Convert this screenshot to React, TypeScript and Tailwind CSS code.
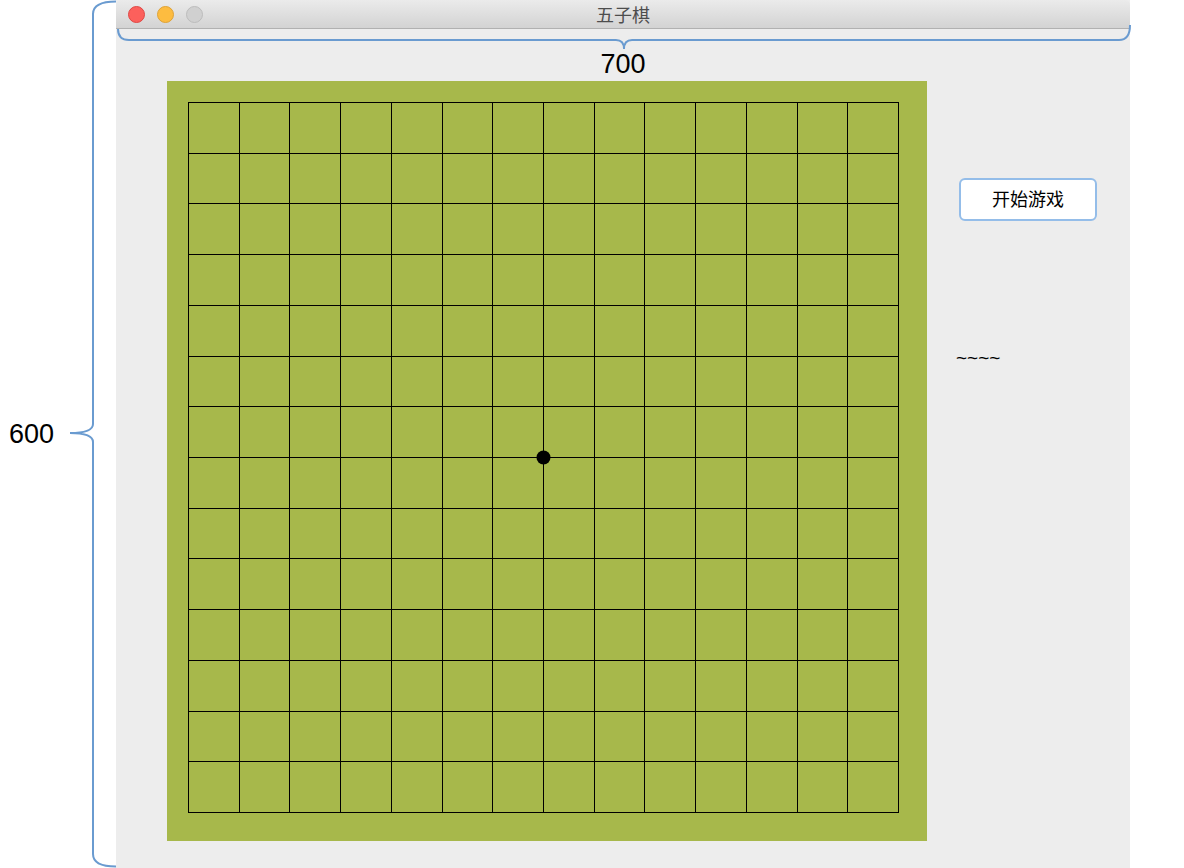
const cells = 14;
const step = 710 / cells;
const lines = Array.from({ length: cells + 1 }, (_, i) => Math.round(i * step) + 0.5);

function Board() {
  return (
    <div className="w-[760px] h-[760px] bg-[#a7b84b] p-[21px]">
      <svg width="712" height="712" className="block">
        {lines.map((p, i) => (
          <line key={"h" + i} x1={0} y1={p} x2={711} y2={p} stroke="#000" strokeWidth={1} />
        ))}
        {lines.map((p, i) => (
          <line key={"v" + i} x1={p} y1={0} x2={p} y2={711} stroke="#000" strokeWidth={1} />
        ))}
        <circle cx={355.5} cy={355.5} r={7} fill="#000" />
      </svg>
    </div>
  );
}

export default function App() {
  return (
    <div className="relative w-[1184px] h-[868px] bg-white flex overflow-hidden font-['Liberation_Sans',sans-serif]">
      {/* left annotation */}
      <div className="w-[116px] h-full relative flex items-center">
        <span className="ml-[9px] text-[27px] leading-none text-black">600</span>
      </div>

      {/* window */}
      <div className="w-[1014px] h-full bg-[#ededed] flex flex-col">
        <div className="h-[29px] shrink-0 rounded-t-[5px] bg-gradient-to-b from-[#ebebeb] to-[#d3d3d3] border-b border-[#b1b1b1] relative flex items-center">
          <div className="flex items-center gap-[12px] pl-[12px]">
            <span className="w-[17px] h-[17px] rounded-full bg-[#fc605c] border border-[#df4744]"></span>
            <span className="w-[17px] h-[17px] rounded-full bg-[#fdbc40] border border-[#dea236]"></span>
            <span className="w-[17px] h-[17px] rounded-full bg-[#d0d0d0] border border-[#bcbcbc]"></span>
          </div>
          <div className="absolute inset-0 flex items-center justify-center text-[18px] text-[#4d4d4d] font-['Noto_Sans_CJK_SC',sans-serif]">
            五子棋
          </div>
        </div>

        <div className="h-[21px] shrink-0"></div>
        <div className="h-[31px] shrink-0 text-center text-[27px] leading-[29px] text-black">700</div>

        <div className="flex pl-[51px]">
          <Board />
          <div className="ml-[32px] pt-[97px] flex flex-col">
            <button className="w-[138px] h-[43px] pb-[3px] bg-white border-2 border-[#94bde9] rounded-[6px] text-[18px] leading-none text-black font-['Noto_Sans_CJK_SC',sans-serif]">
              开始游戏
            </button>
            <div className="mt-[125px] -ml-[3px] text-[19px] leading-[24px] text-black">~~~~</div>
          </div>
        </div>
      </div>

      {/* brace annotations */}
      <svg className="absolute left-0 top-0 pointer-events-none" width="1184" height="868">
        <path
          d="M116 1.5 Q93 1.5 93 14 V424 Q93 433 70 433 Q93 433 93 442 V854 Q93 866.5 116 866.5"
          fill="none"
          stroke="#6a9bd0"
          strokeWidth={2}
        />
        <path
          d="M118 29 Q118 40 129 40 H616 Q624 40 624 49 Q624 40 632 40 H1119 Q1130 40 1130 25"
          fill="none"
          stroke="#6a9bd0"
          strokeWidth={2}
        />
      </svg>
    </div>
  );
}
